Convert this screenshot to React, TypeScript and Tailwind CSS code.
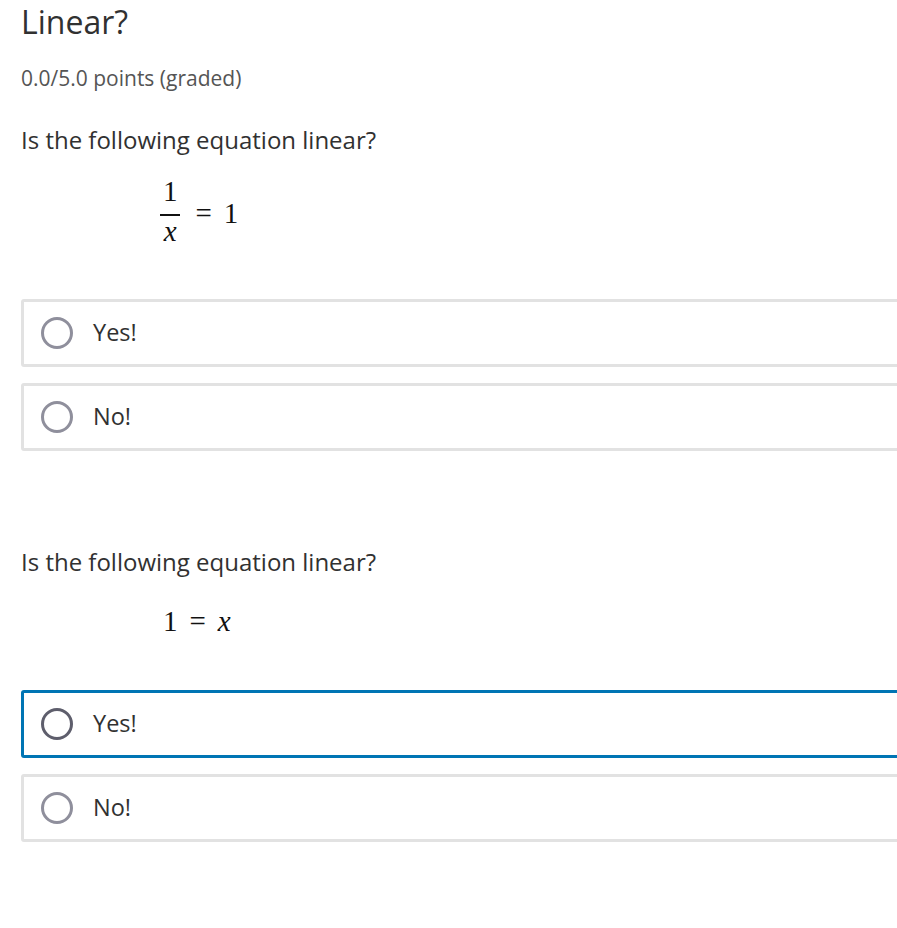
import React, { useState } from 'react';

const serif = "font-['Liberation_Serif','DejaVu_Serif',serif]";

function Radio({ active }: { active?: boolean }) {
  return (
    <span
      className={`block h-[32px] w-[32px] shrink-0 rounded-full border-[3px] ${
        active ? 'border-[#5e5e6c]' : 'border-[#8f8f9c]'
      }`}
    />
  );
}

function Choice({ label, active, onClick }: { label: string; active?: boolean; onClick?: () => void }) {
  return (
    <button
      type="button"
      onClick={onClick}
      className={`flex h-[68px] w-[1000px] items-center gap-[20px] rounded-[3px] border-[3px] bg-white pl-[17px] text-left ${
        active ? 'border-[#0075b4]' : 'border-[#e2e2e2]'
      }`}
    >
      <Radio active={active} />
      <span className="text-[23.5px] text-[#313131]">{label}</span>
    </button>
  );
}

function Question({
  math,
  name,
  selected,
  onSelect,
}: {
  math: React.ReactNode;
  name: string;
  selected: string | null;
  onSelect: (v: string) => void;
}) {
  return (
    <div>
      <p className="text-[24px] leading-[30px] text-[#313131]">Is the following equation linear?</p>
      {math}
      <div className="flex flex-col gap-[16px]">
        {['Yes!', 'No!'].map((opt) => (
          <Choice
            key={name + opt}
            label={opt}
            active={selected === opt}
            onClick={() => onSelect(opt)}
          />
        ))}
      </div>
    </div>
  );
}

export default function App() {
  const [q1, setQ1] = useState<string | null>(null);
  const [q2, setQ2] = useState<string | null>('Yes!');

  return (
    <div className="min-h-[928px] w-full overflow-hidden bg-white font-['Open_Sans',sans-serif]">
      <div className="pl-[21px]">
        <h1 className="text-[32px] leading-[44px] text-[#313131]">Linear?</h1>
        <p className="mt-[21px] text-[21px] leading-[26px] text-[#555]">0.0/5.0 points (graded)</p>

        <div className="mt-[34px]">
          <Question
            name="q1"
            selected={q1}
            onSelect={setQ1}
            math={
              <div className={`${serif} flex h-[144px] items-start pl-[139px] pt-[23px] text-[29px] text-[#111]`}>
                <span className="inline-flex flex-col items-center">
                  <span className="px-[3px] leading-[27px]">1</span>
                  <span className="mt-[9px] h-[2px] w-[20px] bg-[#111]" />
                  <span className="italic leading-[30px]">x</span>
                </span>
                <span className="ml-[15px] mt-[21px] leading-[28px]">=</span>
                <span className="ml-[12px] mt-[21px] leading-[28px]">1</span>
              </div>
            }
          />
        </div>

        <div className="mt-[96px]">
          <Question
            name="q2"
            selected={q2}
            onSelect={setQ2}
            math={
              <div className={`${serif} flex h-[113px] pl-[142px] pt-[29px] text-[29px] leading-[30px] text-[#111]`}>
                <span>1</span>
                <span className="ml-[12px]">=</span>
                <span className="ml-[12px] italic">x</span>
              </div>
            }
          />
        </div>
      </div>
    </div>
  );
}
